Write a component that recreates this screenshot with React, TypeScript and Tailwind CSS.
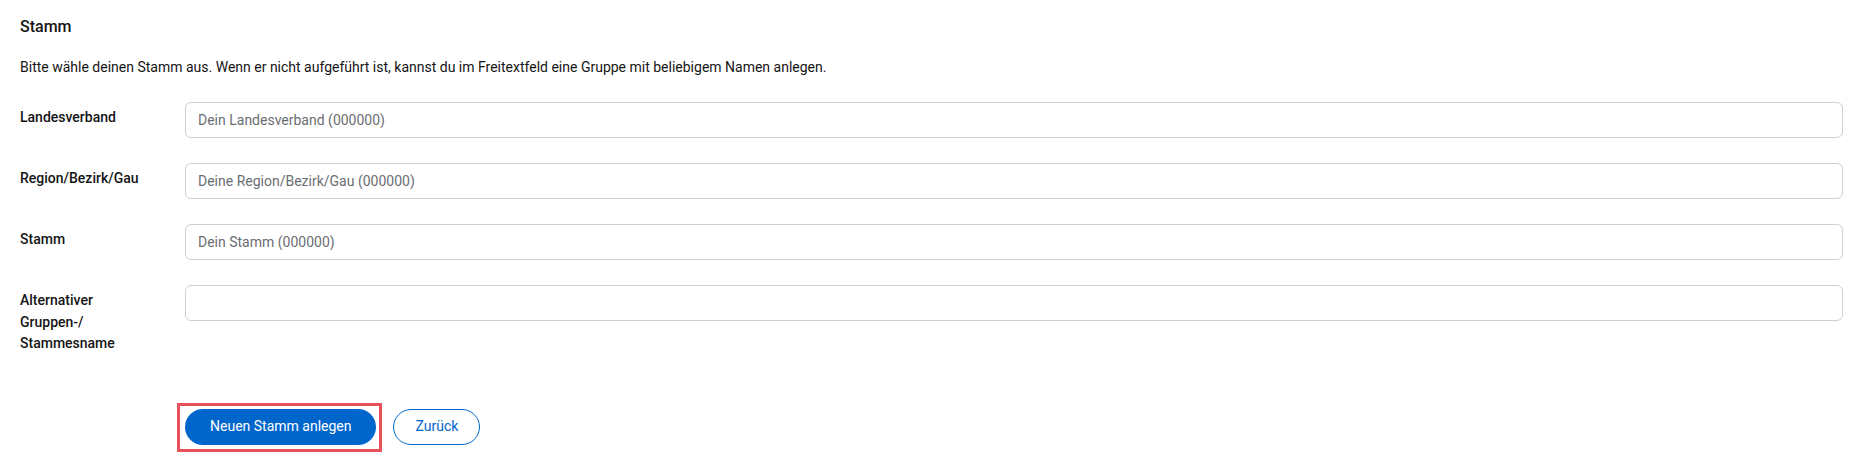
import React from "react";

const rows = [
  { label: "Landesverband", placeholder: "Dein Landesverband (000000)" },
  { label: "Region/Bezirk/Gau", placeholder: "Deine Region/Bezirk/Gau (000000)" },
  { label: "Stamm", placeholder: "Dein Stamm (000000)" },
  { label: "Alternativer Gruppen-/ Stammesname", placeholder: "" },
];

export default function App() {
  return (
    <div
      className="min-h-[460px] bg-white pl-5 pr-[15px] pt-[15px] text-[#151515]"
      style={{ fontFamily: "Roboto, 'Liberation Sans', sans-serif" }}
    >
      <h2 className="text-[16px] leading-6 font-medium">Stamm</h2>
      <p className="mt-[18px] text-[14px] leading-[21px]">
        Bitte wähle deinen Stamm aus. Wenn er nicht aufgeführt ist, kannst du im Freitextfeld eine Gruppe mit beliebigem Namen anlegen.
      </p>
      <div className="mt-[24px] grid grid-cols-[128px_1fr] gap-x-[37px] gap-y-[25px]">
        {rows.map((r) => (
          <React.Fragment key={r.label}>
            <label className="pt-[5px] text-[14px] leading-[21.5px] font-medium">{r.label}</label>
            <div>
              <input
                type="text"
                placeholder={r.placeholder}
                className="h-9 w-full rounded-md border border-[#cfcfcf] bg-white px-3 text-[14px] text-[#151515] placeholder:text-[#6a6e73] outline-none"
              />
            </div>
          </React.Fragment>
        ))}
      </div>
      <div className="mt-[54px] ml-[165px] flex items-center gap-[17px]">
        <span className="relative inline-flex">
          <button className="h-9 rounded-full bg-[#0066cc] px-[25px] text-[14px] text-white">
            Neuen Stamm anlegen
          </button>
          <span className="pointer-events-none absolute -left-[8px] -right-[6px] -top-[6px] -bottom-[7px] border-[3px] border-[#e9525c]" />
        </span>
        <button className="h-9 rounded-full border border-[#0066cc] bg-white px-[21px] text-[14px] text-[#0066cc]">
          Zurück
        </button>
      </div>
    </div>
  );
}
